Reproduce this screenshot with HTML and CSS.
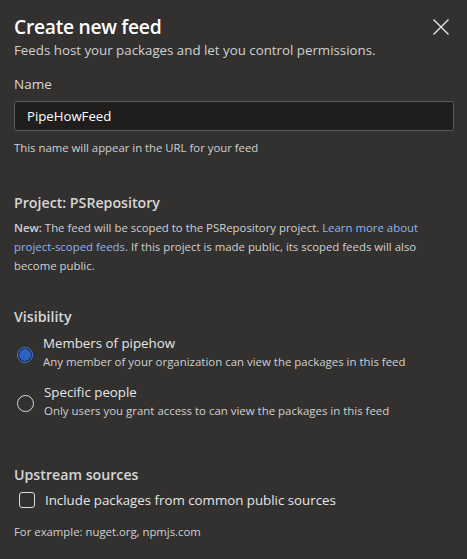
FILE: index.html
```html
<!DOCTYPE html>
<html>
<head>
<meta charset="utf-8">
<link rel="stylesheet" href="styles.css">
</head>
<body>
<div class="panel">
  <header class="head">
    <div class="head-text">
      <h1 class="title">Create new feed</h1>
      <p class="subtitle">Feeds host your packages and let you control permissions.</p>
    </div>
    <button class="close" aria-label="Close">
      <svg width="16" height="16" viewBox="0 0 16 16"><path d="M0.5 0.5 L15.5 15.5 M15.5 0.5 L0.5 15.5" stroke="#e6e6e6" stroke-width="1.4" fill="none"/></svg>
    </button>
  </header>

  <section class="field">
    <label class="label">Name</label>
    <div class="input">PipeHowFeed</div>
    <p class="help">This name will appear in the URL for your feed</p>
  </section>

  <section class="project">
    <h2 class="section-title">Project: PSRepository</h2>
    <p class="para"><b>New:</b> The feed will be scoped to the PSRepository project. <a class="link">Learn more about project&#8209;scoped feeds</a>. If this project is made public, its scoped feeds will also become public.</p>
  </section>

  <section class="visibility">
    <h2 class="section-title">Visibility</h2>
    <div class="radio-row">
      <span class="radio checked"></span>
      <div class="radio-text">
        <div class="opt">Members of pipehow</div>
        <div class="desc">Any member of your organization can view the packages in this feed</div>
      </div>
    </div>
    <div class="radio-row">
      <span class="radio"></span>
      <div class="radio-text">
        <div class="opt">Specific people</div>
        <div class="desc">Only users you grant access to can view the packages in this feed</div>
      </div>
    </div>
  </section>

  <section class="upstream">
    <h2 class="section-title">Upstream sources</h2>
    <div class="check-row">
      <span class="checkbox"></span>
      <span class="opt">Include packages from common public sources</span>
    </div>
    <p class="help example">For example: nuget.org, npmjs.com</p>
  </section>
</div>
</body>
</html>
```

FILE: styles.css
```css
html, body {
  margin: 0;
  padding: 0;
  background: #323130;
}
body {
  width: 467px;
  height: 559px;
  overflow: hidden;
  font-family: "Open Sans", "Noto Sans", sans-serif;
  color: #e6e6e6;
}
.panel {
  padding: 0 13px 0 14px;
}
.head {
  display: flex;
  justify-content: space-between;
  align-items: flex-start;
}
.title {
  margin: 13px 0 0;
  font-size: 19.3px;
  font-weight: 600;
  line-height: 28px;
  color: #ffffff;
  letter-spacing: -0.3px;
}
.subtitle {
  margin: 0;
  font-size: 13.3px;
  line-height: 18px;
  color: #d0d0d0;
}
.close {
  background: none;
  border: 0;
  padding: 0;
  margin: 19px 5px 0 0;
  width: 16px;
  height: 16px;
  display: flex;
}
.field {
  margin-top: 16px;
}
.label {
  display: block;
  font-size: 13.5px;
  line-height: 18px;
  color: #d6d6d6;
}
.input {
  margin-top: 8px;
  height: 28px;
  border: 1px solid #5c5b5a;
  background: #1f1e1d;
  border-radius: 2px;
  padding: 0 12px;
  font-size: 13.2px;
  line-height: 28px;
  color: #ffffff;
}
.help {
  margin: 9px 0 0;
  font-size: 11.35px;
  line-height: 16px;
  color: #d0d0d0;
}
.project {
  margin-top: 36px;
}
.section-title {
  margin: 0;
  font-size: 14.2px;
  font-weight: 600;
  line-height: 22px;
  color: #d6d6d6;
}
.para {
  margin: 4px 0 0;
  font-size: 11.4px;
  line-height: 19px;
  color: #d0d0d0;
  max-width: 410px;
}
.para b {
  font-weight: 600;
}
.link {
  color: #8fb3f0;
}
.visibility {
  margin-top: 31px;
}
.radio-row {
  display: flex;
  align-items: center;
  gap: 10px;
  margin-top: 5px;
  padding-left: 3px;
}
.radio-row + .radio-row {
  margin-top: 11px;
}
.radio {
  width: 15px;
  height: 15px;
  border: 1px solid #dcdcdc;
  border-radius: 50%;
  flex: none;
  margin-top: 5px;
}
.radio.checked {
  border: 1.5px solid #3f7be0;
  width: 14px;
  height: 14px;
  background: radial-gradient(circle, #2d62c4 0 5.5px, #1e2a40 6px 7px);
}
.opt {
  font-size: 13.3px;
  line-height: 20px;
  color: #e6e6e6;
}
.desc {
  font-size: 11.45px;
  line-height: 18px;
  color: #d0d0d0;
}
.upstream {
  margin-top: 44px;
}
.check-row {
  display: flex;
  align-items: center;
  gap: 10px;
  margin-top: 4px;
  padding-left: 5px;
}
.checkbox {
  width: 14px;
  height: 14px;
  border: 1px solid #dcdcdc;
  border-radius: 3px;
  flex: none;
}
.example {
  margin-top: 14px;
}
```
